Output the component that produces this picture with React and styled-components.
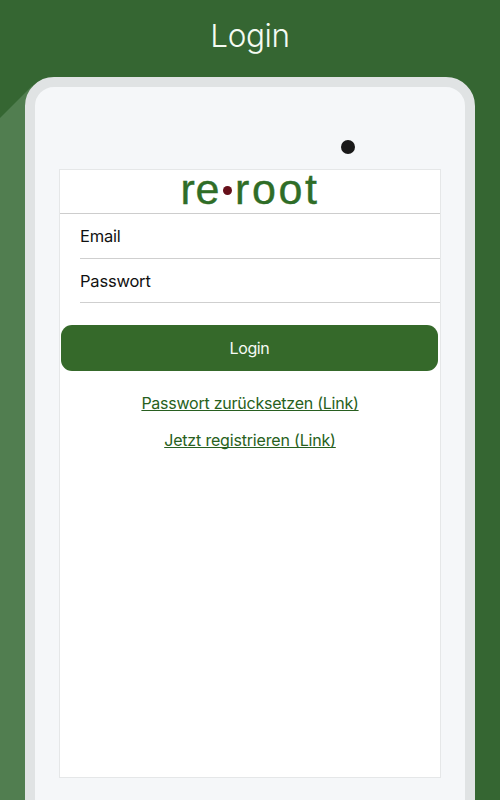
import React from 'react';
import styled, { createGlobalStyle } from 'styled-components';

const GlobalStyle = createGlobalStyle`
  body {
    margin: 0;
    background: #356632;
  }
  * {
    box-sizing: border-box;
  }
`;

const Page = styled.main`
  position: relative;
  display: flex;
  flex-direction: column;
  align-items: center;
  height: 800px;
  overflow: hidden;
  background: #356632;
  font-family: Inter, 'Liberation Sans', sans-serif;
`;

const Title = styled.h1`
  flex: none;
  height: 77px;
  margin: 0;
  padding-top: 16px;
  color: #f4fbf2;
  font-size: 31.5px;
  font-weight: 300;
  line-height: 40px;
  letter-spacing: -0.4px;
`;

const Shadow = styled.div`
  position: absolute;
  top: 77px;
  left: 0;
  width: 60px;
  height: 723px;
  background: #517e50;
  clip-path: polygon(0 41px, 32px 9px, 60px 40px, 60px 100%, 0 100%);
`;

const Tablet = styled.section`
  position: relative;
  flex: none;
  width: 450px;
  height: 760px;
  padding: 82px 24px 0;
  border: 10px solid #e0e3e4;
  border-radius: 29px;
  background: #f5f7f9;
`;

const Camera = styled.span`
  position: absolute;
  top: 53px;
  left: 306px;
  width: 14px;
  height: 14px;
  border-radius: 50%;
  background: #191919;
`;

const Screen = styled.div`
  display: flex;
  flex-direction: column;
  height: 609px;
  border: 1px solid #e5e7e8;
  background: #fff;
`;

const Brand = styled.header`
  display: flex;
  justify-content: center;
  height: 44px;
  border-bottom: 1px solid #cdcdcd;
  color: #2f6d27;
  font-family: 'Liberation Sans', Arial, sans-serif;
  font-size: 43px;
  line-height: 38px;
  -webkit-text-stroke: 0.4px #2f6d27;
`;

const BrandPart = styled.span`
  letter-spacing: ${props => props.$tracking};
`;

const Dot = styled.span`
  width: 9px;
  height: 9px;
  margin: 16px 3px 0 3px;
  border-radius: 50%;
  background: #67101a;
`;

const Field = styled.div`
  height: ${props => props.$height};
  margin-left: 20px;
  border-bottom: 1px solid #cfcfcf;
  color: #111;
  font-size: 16.5px;
  line-height: 44px;
  letter-spacing: -0.2px;
`;

const Button = styled.button`
  height: 46px;
  margin: 22px 2px 0 1px;
  padding: 0;
  border: 0;
  border-radius: 11px;
  background: #35692a;
  color: #f6fbf4;
  font-family: inherit;
  font-size: 16px;
  line-height: 46px;
  letter-spacing: -0.4px;
`;

const Links = styled.nav`
  display: flex;
  flex-direction: column;
  align-items: center;
  gap: 12px;
  padding-top: 20px;
`;

const TextLink = styled.a`
  color: #285f20;
  font-size: 16px;
  line-height: 25px;
  letter-spacing: ${props => props.$tracking};
  text-decoration: underline;
  text-decoration-thickness: 1px;
  text-underline-offset: 1px;
  text-decoration-skip-ink: none;
`;

const App = () => (
  <Page>
    <GlobalStyle />
    <Shadow />
    <Title>Login</Title>
    <Tablet>
      <Camera />
      <Screen>
        <Brand>
          <BrandPart $tracking="0.6px">re</BrandPart>
          <Dot />
          <BrandPart $tracking="2.6px">root</BrandPart>
        </Brand>
        <Field $height="45px">Email</Field>
        <Field $height="44px">Passwort</Field>
        <Button type="button">Login</Button>
        <Links>
          <TextLink href="#reset" $tracking="-0.24px">
            Passwort zurücksetzen (Link)
          </TextLink>
          <TextLink href="#register" $tracking="-0.18px">
            Jetzt registrieren (Link)
          </TextLink>
        </Links>
      </Screen>
    </Tablet>
  </Page>
);

export default App;
